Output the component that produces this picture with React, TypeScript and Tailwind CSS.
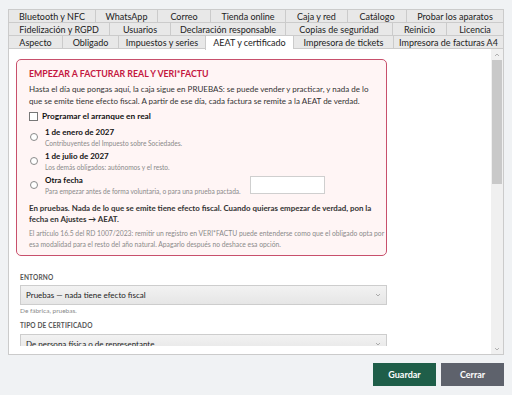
import React from 'react';

type Tab = { label: string; width: string; active?: boolean };

const TAB_ROWS: Tab[][] = [
  [
    { label: 'Bluetooth y NFC', width: 'w-[87px]' },
    { label: 'WhatsApp', width: 'w-[62px]' },
    { label: 'Correo', width: 'w-[53px]' },
    { label: 'Tienda online', width: 'w-[75px]' },
    { label: 'Caja y red', width: 'w-[62px]' },
    { label: 'Catálogo', width: 'w-[59px]' },
    { label: 'Probar los aparatos', width: 'flex-1' },
  ],
  [
    { label: 'Fidelización y RGPD', width: 'w-[101px]' },
    { label: 'Usuarios', width: 'w-[61px]' },
    { label: 'Declaración responsable', width: 'w-[115px]' },
    { label: 'Copias de seguridad', width: 'w-[107px]' },
    { label: 'Reinicio', width: 'w-[54px]' },
    { label: 'Licencia', width: 'flex-1' },
  ],
  [
    { label: 'Aspecto', width: 'w-[54px]' },
    { label: 'Obligado', width: 'w-[56px]' },
    { label: 'Impuestos y series', width: 'w-[87px]' },
    { label: 'AEAT y certificado', width: 'w-[88px]', active: true },
    { label: 'Impresora de tickets', width: 'w-[100px]' },
    { label: 'Impresora de facturas A4', width: 'flex-1' },
  ],
];

const FONT = "font-['Lato','Open_Sans',sans-serif]";

function TabRow({ tabs, last }: { tabs: Tab[]; last?: boolean }) {
  return (
    <div className={`flex ${last ? 'relative z-10 h-[14px] items-start' : 'h-[13px]'}`}>
      {tabs.map((t, i) => (
        <div
          key={t.label}
          className={`${t.width} flex h-[13px] items-center justify-center border-l border-t border-[#cbcbcb] text-[9px] leading-none text-[#222] ${
            i === tabs.length - 1 ? 'border-r' : ''
          } ${t.active ? 'h-[15px] bg-white pb-[2px]' : 'bg-[#e8e8e8]'}`}
        >
          {t.label}
        </div>
      ))}
    </div>
  );
}

function Radio({ title, sub }: { title: string; sub: string }) {
  return (
    <div className="flex items-start">
      <span className="mt-[6px] h-[8px] w-[8px] shrink-0 rounded-full border border-[#8a8a8a] bg-white" />
      <div className="ml-[7px]">
        <div className="text-[8px] font-bold leading-[11px] text-[#111]">{title}</div>
        <div className="text-[6.6px] leading-[10px] text-[#8a8a8a]">{sub}</div>
      </div>
    </div>
  );
}

function Chevron() {
  return (
    <svg width="6" height="4" viewBox="0 0 6 4" className="shrink-0">
      <path d="M1 1 3 3 5 1" fill="none" stroke="#9a9a9a" strokeWidth="0.8" />
    </svg>
  );
}

function SelectBox({ value }: { value: string }) {
  return (
    <div className="flex h-[20px] w-[367px] shrink-0 items-center justify-between border border-[#cdcdcd] bg-gradient-to-b from-[#f2f2f2] to-[#e6e6e6] pl-[5px] pr-[5px]">
      <span className="text-[8px] text-[#222]">{value}</span>
      <Chevron />
    </div>
  );
}

function Scrollbar() {
  return (
    <div className="flex w-[12px] shrink-0 flex-col bg-[#f0f0f0]">
      <div className="flex h-[11px] items-center justify-center">
        <svg width="6" height="4" viewBox="0 0 6 4">
          <path d="M1 3 3 1 5 3" fill="none" stroke="#a0a0a0" strokeWidth="0.8" />
        </svg>
      </div>
      <div className="mx-[1px] h-[124px] bg-[#c9c9c9]" />
      <div className="flex-1" />
      <div className="flex h-[11px] items-center justify-center">
        <svg width="6" height="4" viewBox="0 0 6 4">
          <path d="M1 1 3 3 5 1" fill="none" stroke="#a0a0a0" strokeWidth="0.8" />
        </svg>
      </div>
    </div>
  );
}

export default function App() {
  return (
    <div className={`${FONT} w-[512px]`}>
      <div className="flex h-[395px] flex-col bg-[#f0f2f4] px-[8px] pt-[9px]">
        <div className="flex flex-col">
          {TAB_ROWS.map((row, i) => (
            <TabRow key={i} tabs={row} last={i === TAB_ROWS.length - 1} />
          ))}
        </div>

        <div className="-mt-px flex h-[307px] border border-[#cbcbcb] bg-white">
          <div className="flex flex-1 flex-col pb-[8px]">
            <div className="flex-1 overflow-hidden pl-[7px] pt-[10px]">
              <div className="w-[371px] rounded-[5px] border-[1.5px] border-[#c8506c] bg-[#fff5f5] px-[12px] pb-[5px] pt-[7px]">
                <h2 className="text-[8.8px] font-bold leading-[14px] text-[#c4173f]">
                  EMPEZAR A FACTURAR REAL Y VERI*FACTU
                </h2>
                <p className="mt-[2px] whitespace-nowrap text-[8px] leading-[12px] text-[#333]">
                  Hasta el día que pongas aquí, la caja sigue en PRUEBAS: se puede vender y practicar, y nada de lo
                  <br />
                  que se emite tiene efecto fiscal. A partir de ese día, cada factura se remite a la AEAT de verdad.
                </p>
                <label className="mt-[2px] flex h-[14px] items-center">
                  <span className="h-[9px] w-[9px] shrink-0 border border-[#777] bg-white" />
                  <span className="ml-[4px] text-[8.3px] font-bold text-[#111]">Programar el arranque en real</span>
                </label>
                <div className="mt-[3.5px] flex flex-col gap-[3px] pl-[1px]">
                  <Radio title="1 de enero de 2027" sub="Contribuyentes del Impuesto sobre Sociedades." />
                  <Radio title="1 de julio de 2027" sub="Los demás obligados: autónomos y el resto." />
                  <div className="flex items-start">
                    <Radio
                      title="Otra fecha"
                      sub="Para empezar antes de forma voluntaria, o para una prueba pactada."
                    />
                    <div className="ml-[9px] mt-[1px] h-[18px] w-[75px] border border-[#cfcfcf] bg-white" />
                  </div>
                </div>
                <p className="mt-[7.5px] whitespace-nowrap text-[7.9px] font-bold leading-[11px] text-[#333]">
                  En pruebas. Nada de lo que se emite tiene efecto fiscal. Cuando quieras empezar de verdad, pon la
                  <br />
                  fecha en Ajustes → AEAT.
                </p>
                <p className="mt-[3px] whitespace-nowrap text-[6.75px] leading-[11px] text-[#8a8a8a]">
                  El artículo 16.5 del RD 1007/2023: remitir un registro en VERI*FACTU puede entenderse como que el obligado opta por
                  <br />
                  esa modalidad para el resto del año natural. Apagarlo después no deshace esa opción.
                </p>
              </div>

              <div className="pl-[4px] pt-[17px]">
                <div className="text-[6.5px] font-bold leading-[10px] tracking-wide text-[#555]">ENTORNO</div>
                <div className="mt-[2px]">
                  <SelectBox value="Pruebas — nada tiene efecto fiscal" />
                </div>
                <div className="mt-[1px] text-[6.5px] leading-[10px] text-[#8a8a8a]">De fábrica, pruebas.</div>
                <div className="mt-[5px] text-[6.5px] font-bold leading-[10px] tracking-wide text-[#555]">
                  TIPO DE CERTIFICADO
                </div>
                <div className="mt-[3px]">
                  <SelectBox value="De persona física o de representante" />
                </div>
              </div>
            </div>
          </div>
          <Scrollbar />
        </div>

        <div className="flex justify-end gap-[5px] pt-[8px]">
          <button className="h-[23px] w-[63px] bg-[#1f5e49] text-[9px] font-bold text-white">Guardar</button>
          <button className="h-[23px] w-[63px] bg-[#5e626c] text-[9px] font-bold text-white">Cerrar</button>
        </div>
      </div>
    </div>
  );
}
